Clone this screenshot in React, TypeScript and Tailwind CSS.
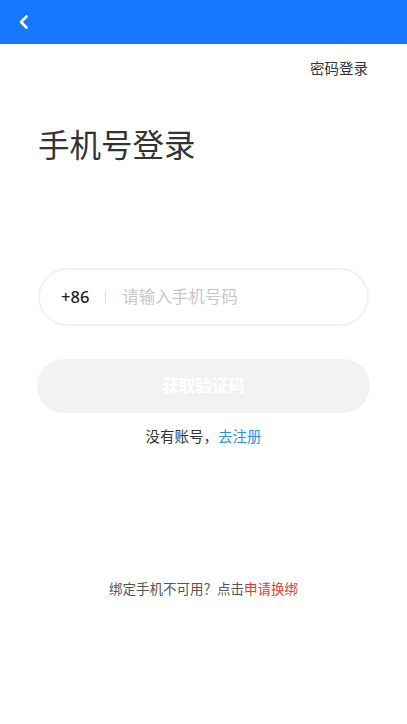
export default function App() {
  return (
    <div
      className="flex min-h-[724px] w-full flex-col bg-white"
      style={{ fontFamily: '"Noto Sans", "Noto Sans CJK SC", sans-serif' }}
    >
      <div className="flex h-[44px] items-center bg-[#1677ff] px-[18px]">
        <svg width="12" height="16" viewBox="0 0 12 16" fill="none">
          <path d="M8.5 2.5 3 8l5.5 5.5" stroke="white" strokeWidth="2.6" strokeLinecap="round" strokeLinejoin="round" />
        </svg>
      </div>

      <div className="flex justify-end px-[39px] pt-[14px] text-[14.5px] leading-[20px] text-[#333]">密码登录</div>

      <h1 className="mt-[45px] px-[38px] text-[31.5px] leading-[44px] font-normal text-[#333]">手机号登录</h1>

      <div className="mx-[38px] mt-[101px] flex h-[58px] items-center rounded-full border-2 border-[#f2f2f2] px-[21px]">
        <span className="text-[16.5px] font-medium text-[#222]">+86</span>
        <span className="mx-[16px] h-[12px] w-px bg-[#ddd]" />
        <span className="text-[16.5px] text-[#c8c8c8]">请输入手机号码</span>
      </div>

      <button className="mx-[37px] mt-[33px] flex h-[54px] items-center justify-center rounded-full bg-[#f2f2f2] text-[16.5px] font-bold text-white">
        获取验证码
      </button>

      <div className="mt-[13px] text-center text-[14.5px] leading-[20px] text-[#333]">
        没有账号，<span className="text-[#2f8fe0]">去注册</span>
      </div>

      <div className="mt-[134px] text-center text-[13.5px] leading-[18px] text-[#555]">
        绑定手机不可用？点击<span className="text-[#e53c2f]">申请换绑</span>
      </div>
    </div>
  );
}
